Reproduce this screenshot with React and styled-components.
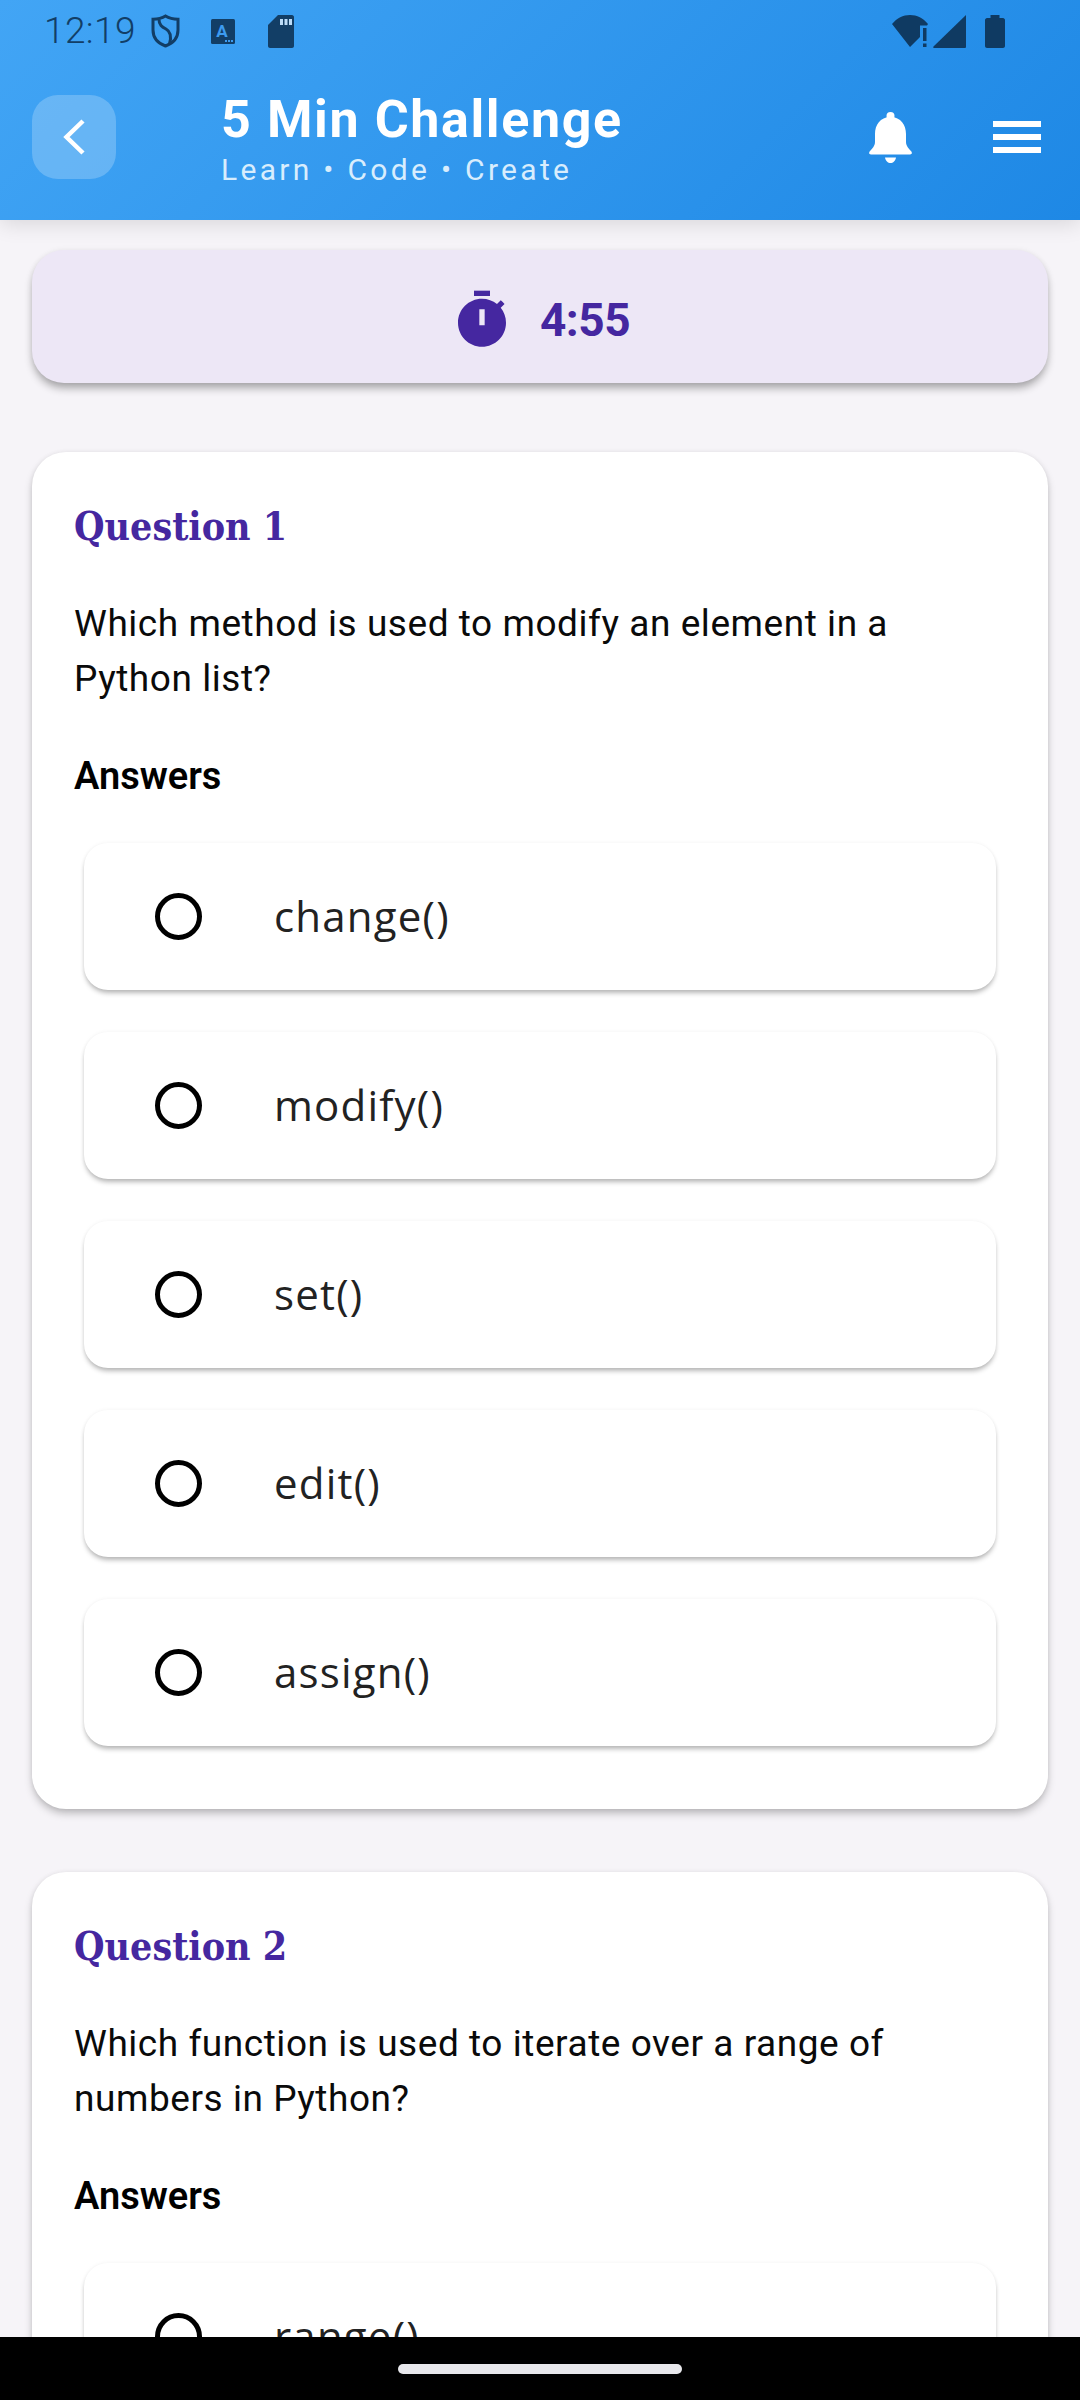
import React from "react";
import styled, { createGlobalStyle } from "styled-components";

const GlobalStyle = createGlobalStyle`
  html, body {
    margin: 0;
    padding: 0;
    background: #f6f4f8;
  }
  * {
    box-sizing: border-box;
  }
`;

const Screen = styled.div`
  width: 1080px;
  height: 2400px;
  display: flex;
  flex-direction: column;
  overflow: hidden;
  background: #f6f4f8;
  font-family: Roboto, "Liberation Sans", sans-serif;
`;

const Header = styled.header`
  flex: none;
  height: 220px;
  display: flex;
  flex-direction: column;
  position: relative;
  z-index: 2;
  background: linear-gradient(135deg, #42a5f5, #1e88e5);
  box-shadow: 0 4px 20px rgba(0, 0, 0, 0.12);
`;

const StatusBar = styled.div`
  height: 62px;
  flex: none;
  display: flex;
  align-items: center;
  padding: 0 75px 0 44px;
  color: #123e66;
`;

const Time = styled.span`
  font-size: 37px;
  font-weight: 300;
  line-height: 62px;
  width: 107px;
  letter-spacing: 0.4px;
`;

const StatusIcon = styled.svg`
  display: block;
  flex: none;
  margin-right: ${props => props.$gap || 0}px;
`;

const StatusSpacer = styled.div`
  flex: 1;
`;

const AppBar = styled.div`
  flex: 1;
  display: flex;
  align-items: flex-start;
  padding: 33px 39px 0 32px;
`;

const BackButton = styled.button`
  flex: none;
  width: 84px;
  height: 84px;
  border: 0;
  padding: 0;
  border-radius: 26px;
  background: rgba(255, 255, 255, 0.22);
  display: flex;
  align-items: center;
  justify-content: center;
`;

const TitleBlock = styled.div`
  flex: 1;
  margin-left: 105px;
  margin-top: -3px;
`;

const Title = styled.h1`
  margin: 0;
  color: #fff;
  font-size: 52px;
  font-weight: 700;
  line-height: 56px;
  letter-spacing: 1.6px;
  white-space: nowrap;
`;

const Subtitle = styled.div`
  margin-top: 2px;
  color: #d8edfd;
  font-size: 30px;
  font-weight: 400;
  line-height: 40px;
  letter-spacing: 3.3px;
  white-space: nowrap;
`;

const BellButton = styled.div`
  flex: none;
  margin-top: 17px;
  margin-right: 81px;
`;

const Burger = styled.div`
  flex: none;
  width: 48px;
  margin-top: 26px;
  display: flex;
  flex-direction: column;
  gap: 7.5px;
`;

const BurgerBar = styled.span`
  display: block;
  height: 5.5px;
  background: #fff;
`;

const Content = styled.main`
  flex: 1;
  min-height: 0;
  overflow: hidden;
  padding: 30px 32px 0;
  display: flex;
  flex-direction: column;
`;

const TimerCard = styled.div`
  flex: none;
  height: 133px;
  border-radius: 32px;
  background: #ede7f6;
  display: flex;
  align-items: center;
  justify-content: center;
  gap: 26px;
  margin-bottom: 69px;
  box-shadow: 0 6px 9px -1px rgba(0, 0, 0, 0.32), 0 0 6px rgba(0, 0, 0, 0.05);
`;

const TimerIcon = styled.svg`
  display: block;
  margin-top: 6px;
`;

const TimerText = styled.span`
  color: #4527a0;
  font-size: 46px;
  font-weight: 700;
  letter-spacing: -0.5px;
  margin-top: 6px;
`;

const QuestionCard = styled.section`
  flex: none;
  height: 1357px;
  margin-bottom: 63px;
  padding: 50px 52px 0 42px;
  border-radius: 34px;
  background: #fff;
  box-shadow: 0 5px 8px -1px rgba(0, 0, 0, 0.26), 0 0 5px rgba(0, 0, 0, 0.06);
`;

const QuestionTitle = styled.h2`
  margin: 0;
  color: #4527a0;
  font-family: "DejaVu Serif Condensed", "DejaVu Serif", serif;
  font-size: 39px;
  font-weight: 700;
  line-height: 48px;
`;

const QuestionText = styled.p`
  margin: 46px 0 0;
  color: #0a0a0a;
  font-size: 37px;
  line-height: 55px;
  letter-spacing: 0.55px;
`;

const AnswersLabel = styled.div`
  margin-top: 48px;
  color: #000;
  font-size: 38px;
  font-weight: 600;
  line-height: 44px;
`;

const OptionList = styled.div`
  margin: 45px 0 0 10px;
  display: flex;
  flex-direction: column;
  gap: 42px;
`;

const Option = styled.div`
  flex: none;
  height: 147px;
  padding-left: 71px;
  display: flex;
  align-items: center;
  gap: 72px;
  border-radius: 24px;
  background: #fff;
  box-shadow: 0 4px 5px -1px rgba(0, 0, 0, 0.28), 0 0 4px rgba(0, 0, 0, 0.05);
`;

const Radio = styled.span`
  flex: none;
  width: 47px;
  height: 47px;
  border: 5px solid #000;
  border-radius: 50%;
`;

const OptionText = styled.span`
  color: #222;
  font-family: "Open Sans", "Liberation Sans", sans-serif;
  font-size: 42px;
  font-weight: 400;
  letter-spacing: 1.2px;
  margin-top: -2px;
`;

const NavBar = styled.div`
  flex: none;
  height: 63px;
  position: relative;
  z-index: 2;
  background: #000;
  display: flex;
  justify-content: center;
  padding-top: 27px;
`;

const NavPill = styled.span`
  display: block;
  width: 284px;
  height: 10px;
  border-radius: 5px;
  background: #e8e8ec;
`;

const questions = [
  {
    title: "Question 1",
    text: "Which method is used to modify an element in a Python list?",
    options: ["change()", "modify()", "set()", "edit()", "assign()"],
  },
  {
    title: "Question 2",
    text: "Which function is used to iterate over a range of numbers in Python?",
    options: ["range()", "loop()", "iterate()", "list()", "for()"],
  },
];

const StatusLeftIcons = () => (
  <>
    <StatusIcon $gap={31} width="29" height="34" viewBox="0 0 29 34" fill="none" stroke="#123e66" strokeWidth="3">
      <path d="M14.5 2C18.5 4.5 22.5 5.2 27 5.2V16C27 24 21.5 29.5 14.5 32C7.5 29.5 2 24 2 16V5.2C6.5 5.2 10.5 4.5 14.5 2Z" />
      <path d="M8 5.5C8 11 11 13 15 15C19.5 17.5 21 21.5 18.5 30" />
    </StatusIcon>
    <StatusIcon $gap={33} width="24" height="25" viewBox="0 0 24 25">
      <rect width="24" height="25" rx="1.5" fill="#123e66" />
      <text x="11" y="18" fontFamily="Roboto, sans-serif" fontSize="17" fontWeight="700" textAnchor="middle" fill="#3d9bef">A</text>
      <rect x="14" y="21" width="2" height="2" fill="#3d9bef" />
      <rect x="17" y="21" width="2" height="2" fill="#3d9bef" />
      <rect x="20" y="21" width="2" height="2" fill="#3d9bef" />
    </StatusIcon>
    <StatusIcon width="26" height="33" viewBox="0 0 26 33">
      <path d="M10 0H24C25 0 26 1 26 2V31C26 32 25 33 24 33H2C1 33 0 32 0 31V10Z" fill="#123e66" />
      <rect x="12" y="4" width="3" height="6" fill="#bcdcf8" />
      <rect x="16.5" y="4" width="3" height="6" fill="#bcdcf8" />
      <rect x="21" y="4" width="3" height="6" fill="#bcdcf8" />
    </StatusIcon>
  </>
);

const StatusRightIcons = () => (
  <>
    <StatusIcon $gap={5} width="36" height="32" viewBox="0 0 36 32" fill="#0f3a62">
      <path d="M0 9C5 3 11 0 18 0C25 0 31 3 36 9L35 10.5H28V22L18 32Z" />
      <rect x="31" y="13" width="3.5" height="13" />
      <rect x="31" y="28.5" width="3.5" height="3.5" />
    </StatusIcon>
    <StatusIcon $gap={19} width="33" height="33" viewBox="0 0 33 33" fill="#0f3a62">
      <path d="M33 0V31.5C33 32.5 32.5 33 31.5 33H1C0 33 0 32 0.5 31.5Z" />
    </StatusIcon>
    <StatusIcon width="20" height="33" viewBox="0 0 20 33" fill="#0f3a62">
      <path d="M5.5 0H14.5V3H18C19 3 20 4 20 5V31C20 32 19 33 18 33H2C1 33 0 32 0 31V5C0 4 1 3 2 3H5.5Z" />
    </StatusIcon>
  </>
);

const ChevronLeft = () => (
  <svg width="22" height="36" viewBox="0 0 22 36" fill="none" stroke="#fff" strokeWidth="4.5">
    <path d="M20 2L3.5 18L20 34" />
  </svg>
);

const BellIcon = () => (
  <svg width="43" height="51" viewBox="0 0 43 51" fill="#fff" style={{ display: "block" }}>
    <circle cx="21.5" cy="4" r="4" />
    <path d="M21.5 5C11 5 6 13 6 22V30C6 34 3 37 1 39C-0.5 41 0 42.5 2 42.5H41C43 42.5 43.5 41 42 39C40 37 37 34 37 30V22C37 13 32 5 21.5 5Z" />
    <path d="M16 45.5H27C26.5 49 24 51 21.5 51C19 51 16.5 49 16 45.5Z" />
  </svg>
);

const Stopwatch = () => (
  <TimerIcon width="64" height="64" viewBox="0 0 24 24" fill="#4527a0">
    <path d="M15 1H9v2h6V1z" />
    <path d="M19.03 7.39l1.42-1.42c-.43-.51-.9-.99-1.41-1.41l-1.42 1.42C16.07 4.74 14.12 4 12 4c-4.97 0-9 4.03-9 9s4.02 9 9 9 9-4.03 9-9c0-2.12-.74-4.07-1.97-5.61zM11 14V8h2v6h-2z" fillRule="evenodd" />
  </TimerIcon>
);

const App = () => (
  <Screen>
    <GlobalStyle />
    <Header>
      <StatusBar>
        <Time>12:19</Time>
        <StatusLeftIcons />
        <StatusSpacer />
        <StatusRightIcons />
      </StatusBar>
      <AppBar>
        <BackButton aria-label="Back">
          <ChevronLeft />
        </BackButton>
        <TitleBlock>
          <Title>5 Min Challenge</Title>
          <Subtitle>Learn • Code • Create</Subtitle>
        </TitleBlock>
        <BellButton>
          <BellIcon />
        </BellButton>
        <Burger>
          <BurgerBar />
          <BurgerBar />
          <BurgerBar />
        </Burger>
      </AppBar>
    </Header>
    <Content>
      <TimerCard>
        <Stopwatch />
        <TimerText>4:55</TimerText>
      </TimerCard>
      {questions.map(q => (
        <QuestionCard key={q.title}>
          <QuestionTitle>{q.title}</QuestionTitle>
          <QuestionText>{q.text}</QuestionText>
          <AnswersLabel>Answers</AnswersLabel>
          <OptionList>
            {q.options.map(option => (
              <Option key={option}>
                <Radio />
                <OptionText>{option}</OptionText>
              </Option>
            ))}
          </OptionList>
        </QuestionCard>
      ))}
    </Content>
    <NavBar>
      <NavPill />
    </NavBar>
  </Screen>
);

export default App;
